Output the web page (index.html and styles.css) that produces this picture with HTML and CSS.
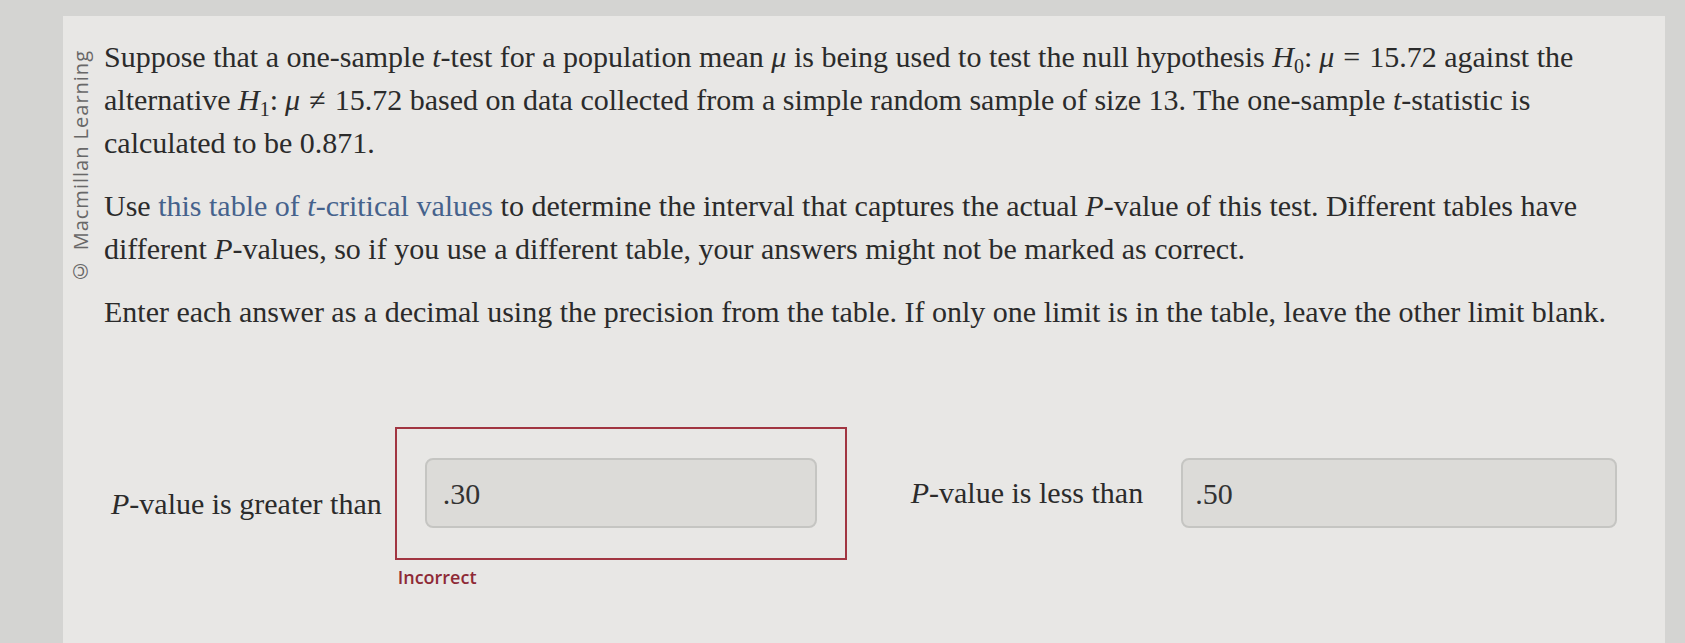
FILE: index.html
```html
<!DOCTYPE html>
<html lang="en">
<head>
<meta charset="utf-8">
<title>One-sample t-test</title>
<link rel="stylesheet" href="styles.css">
</head>
<body>
<div class="page">
  <div class="panel">
    <div class="watermark"><span class="wm-text">© Macmillan Learning</span></div>
    <div class="content">
      <p class="para">Suppose that a one-sample <i>t</i>-test for a population mean <i>μ</i> is being used to test the null hypothesis <span class="math"><i>H</i><sub>0</sub>:<span class="sp"></span><i>μ</i><span class="op">=</span>15.72</span> against the alternative <span class="math"><i>H</i><sub>1</sub>:<span class="sp"></span><i>μ</i><span class="op">≠</span>15.72</span> based on data collected from a simple random sample of size 13. The one-sample <i>t</i>-statistic is calculated to be 0.871.</p>
      <p class="para">Use <a class="link" href="#">this table of <i>t</i>-critical values</a> to determine the interval that captures the actual <i>P</i>-value of this test. Different tables have different <i>P</i>-values, so if you use a different table, your answers might not be marked as correct.</p>
      <p class="para last">Enter each answer as a decimal using the precision from the table. If only one limit is in the table, leave the other limit blank.</p>
      <div class="answers">
        <div class="label label-gt"><i>P</i>-value is greater than</div>
        <div class="answer-wrap">
          <div class="incorrect-box">
            <div class="field field-gt">.30</div>
          </div>
          <div class="feedback">Incorrect</div>
        </div>
        <div class="label label-lt"><i>P</i>-value is less than</div>
        <div class="field field-lt">.50</div>
      </div>
    </div>
  </div>
</div>
</body>
</html>
```

FILE: styles.css
```css
html, body {
  margin: 0;
  padding: 0;
}

body {
  background: #d4d4d2;
  width: 1685px;
  height: 643px;
  overflow: hidden;
}

.page {
  padding: 16px 20px 0 63px;
  height: 627px;
}

.panel {
  display: flex;
  height: 100%;
  background: #e8e7e5;
  color: #2b2b2b;
  font-family: "Liberation Serif", "Times New Roman", serif;
  font-size: 30px;
  line-height: 43px;
}

.watermark {
  width: 41px;
  flex: none;
  padding: 34px 0 0 8px;
  box-sizing: border-box;
}

.wm-text {
  display: inline-block;
  writing-mode: vertical-rl;
  transform: rotate(180deg);
  font-family: "Open Sans", "Liberation Sans", sans-serif;
  font-size: 20px;
  font-weight: 500;
  line-height: 20px;
  letter-spacing: 1px;
  color: #686868;
  white-space: nowrap;
}

.content {
  flex: 1;
  padding: 19px 30px 0 0;
}

.para {
  margin: 0 0 20px 0;
}

.para.last {
  margin-bottom: 0;
}

.math {
  white-space: nowrap;
}

.math sub {
  font-size: 20px;
  line-height: 0;
  vertical-align: -6px;
}

.sp {
  display: inline-block;
  width: 7px;
}

.op {
  display: inline-block;
  margin: 0 9px;
}

.link {
  color: #45628c;
  text-decoration: none;
}

.answers {
  display: flex;
  align-items: flex-start;
  margin-top: 94px;
  padding-left: 7px;
}

.label {
  white-space: nowrap;
}

.label-gt {
  margin-top: 55px;
  margin-right: 13px;
}

.label-lt {
  margin-top: 44px;
  margin-left: 64px;
  margin-right: 38px;
}

.answer-wrap {
  display: flex;
  flex-direction: column;
}

.incorrect-box {
  border: 2px solid #a13541;
  padding: 29px 28px 30px 28px;
}

.field {
  box-sizing: border-box;
  height: 70px;
  border: 2px solid #c5c5c2;
  border-radius: 8px;
  background: #dcdbd8;
  display: flex;
  align-items: center;
  padding-left: 16px;
  font-size: 30px;
  color: #333;
}

.field-gt {
  width: 392px;
}

.field-lt {
  width: 436px;
  margin-top: 31px;
  padding-left: 12px;
}

.feedback {
  margin-top: 5px;
  padding-left: 3px;
  font-family: "Open Sans", "Liberation Sans", sans-serif;
  font-weight: 600;
  font-size: 18px;
  line-height: 24px;
  color: #8e2a36;
}
```
